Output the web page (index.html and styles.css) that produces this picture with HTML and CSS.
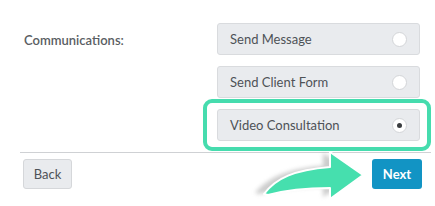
FILE: index.html
```html
<!DOCTYPE html>
<html>
<head>
<meta charset="utf-8">
<link rel="stylesheet" href="styles.css">
</head>
<body>
<div class="page">
  <div class="form-row">
    <div class="label">Communications:</div>
    <div class="options">
      <div class="option"><span>Send Message</span><span class="radio"></span></div>
      <div class="option"><span>Send Client Form</span><span class="radio"></span></div>
      <div class="option selected"><span>Video Consultation</span><span class="radio checked"></span>
        <div class="highlight"></div>
      </div>
    </div>
  </div>
  <div class="divider"></div>
  <div class="actions">
    <button class="btn back">Back</button>
    <button class="btn next">Next</button>
  </div>
  <svg class="arrow" width="140" height="60" viewBox="240 148 140 60">
    <defs>
      <filter id="sh" x="-20%" y="-20%" width="140%" height="140%">
        <feGaussianBlur stdDeviation="2"/>
      </filter>
    </defs>
    <path d="M258 194 C 272 178, 290 170, 326 167 L 326 154 L 361 176 L 326 198 L 326 188 C 300 188, 282 190, 262 195 Z" fill="#9a9a9a" opacity="0.5" filter="url(#sh)" transform="translate(-3,-1)"/>
    <path d="M264 194 C 276 178, 294 170, 330 167 L 330 152 L 363 175 L 330 199 L 330 188 C 304 188, 286 190, 268 195 Z" fill="#46dfae" stroke="#fff" stroke-width="2" stroke-linejoin="round"/>
  </svg>
</div>
</body>
</html>
```
FILE: styles.css
```css
* { box-sizing: border-box; }
html, body { margin: 0; padding: 0; background: #fff; }
body { font-family: Lato, "Open Sans", sans-serif; font-size: 13px; color: #4e5257; }
.page { position: relative; width: 435px; height: 206px; padding-top: 23px; }
.form-row { display: flex; padding-left: 24px; }
.label { width: 193px; font-weight: 600; color: #5a5e63; padding-top: 9px; }
.options { display: flex; flex-direction: column; gap: 11px; width: 203px; }
.option {
  position: relative;
  height: 32px;
  background: #e9ebee;
  border: 1px solid #d9dbde;
  border-radius: 3px;
  display: flex;
  align-items: center;
  justify-content: space-between;
  padding: 0 12px 0 12px;
}
.radio {
  width: 15px; height: 15px; border-radius: 50%;
  background: #fff; border: 1px solid #d3d5d8;
  display: flex; align-items: center; justify-content: center;
}
.radio.checked::after {
  content: ""; width: 5px; height: 5px; border-radius: 50%; background: #3a3d40;
}
.highlight {
  position: absolute; left: -15px; top: -11px; right: -12px; bottom: -11px;
  border: 4px solid #46dcae; border-radius: 9px;
}
.divider { height: 1px; background: #cfd1d4; margin: 11px 4px 0 20px; }
.actions { display: flex; justify-content: space-between; padding: 6px 13px 0 23px; }
.btn { font-family: Lato, "Open Sans", sans-serif; font-size: 13px; height: 30px; border-radius: 3px; cursor: pointer; }
.back { width: 49px; background: #e9ebee; border: 1px solid #d5d7da; color: #4e5257; }
.next { width: 50px; background: #1294c4; border: none; color: #fff; font-weight: 700; }
.arrow { position: absolute; left: 240px; top: 148px; }
```
